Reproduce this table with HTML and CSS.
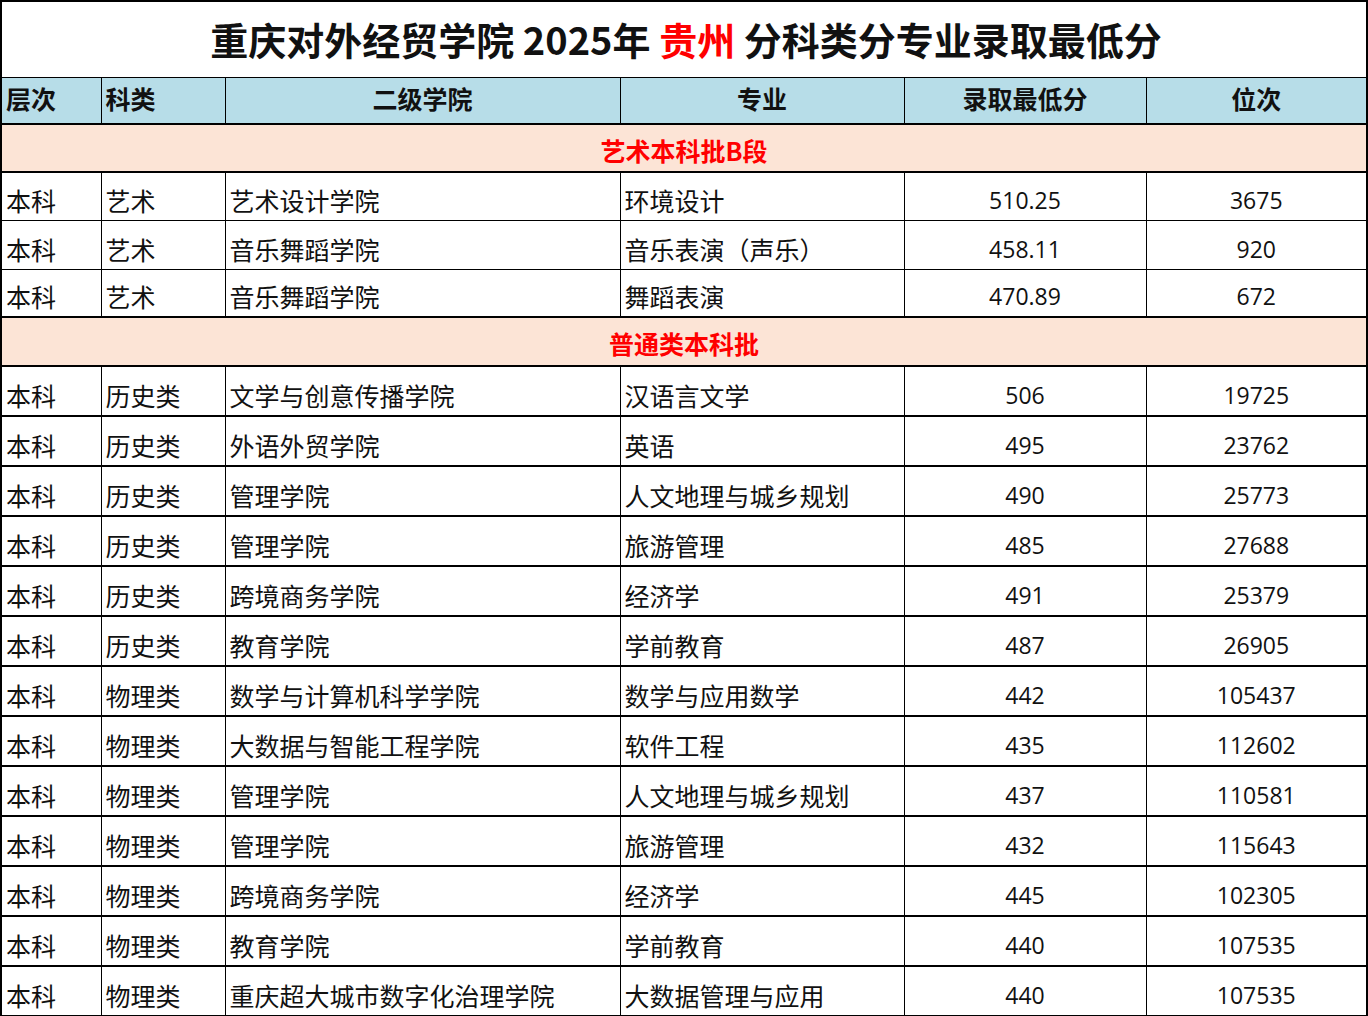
FILE: index.html
```html
<!DOCTYPE html>
<html lang="zh-CN">
<head>
<meta charset="utf-8">
<title>重庆对外经贸学院 2025年 贵州 分科类分专业录取最低分</title>
<link rel="stylesheet" href="styles.css">
</head>
<body>
<table class="sheet">
  <colgroup>
    <col class="c1"><col class="c2"><col class="c3"><col class="c4"><col class="c5"><col class="c6">
  </colgroup>
  <tr class="title-row"><td colspan="6" class="title">重庆对外经贸学院 2025年 <span class="red">贵州</span> 分科类分专业录取最低分</td></tr>
  <tr class="head">
    <th class="left">层次</th><th class="left">科类</th><th>二级学院</th><th>专业</th><th>录取最低分</th><th>位次</th>
  </tr>
  <tr class="section s1"><td colspan="6">艺术本科批B段</td></tr>
  <tr class="r48"><td>本科</td><td>艺术</td><td>艺术设计学院</td><td>环境设计</td><td class="num">510.25</td><td class="num">3675</td></tr>
  <tr class="r49"><td>本科</td><td>艺术</td><td>音乐舞蹈学院</td><td>音乐表演（声乐）</td><td class="num">458.11</td><td class="num">920</td></tr>
  <tr class="r48"><td>本科</td><td>艺术</td><td>音乐舞蹈学院</td><td>舞蹈表演</td><td class="num">470.89</td><td class="num">672</td></tr>
  <tr class="section s2"><td colspan="6">普通类本科批</td></tr>
  <tr class="r50"><td>本科</td><td>历史类</td><td>文学与创意传播学院</td><td>汉语言文学</td><td class="num">506</td><td class="num">19725</td></tr>
  <tr class="r50"><td>本科</td><td>历史类</td><td>外语外贸学院</td><td>英语</td><td class="num">495</td><td class="num">23762</td></tr>
  <tr class="r50"><td>本科</td><td>历史类</td><td>管理学院</td><td>人文地理与城乡规划</td><td class="num">490</td><td class="num">25773</td></tr>
  <tr class="r50"><td>本科</td><td>历史类</td><td>管理学院</td><td>旅游管理</td><td class="num">485</td><td class="num">27688</td></tr>
  <tr class="r50"><td>本科</td><td>历史类</td><td>跨境商务学院</td><td>经济学</td><td class="num">491</td><td class="num">25379</td></tr>
  <tr class="r50"><td>本科</td><td>历史类</td><td>教育学院</td><td>学前教育</td><td class="num">487</td><td class="num">26905</td></tr>
  <tr class="r50"><td>本科</td><td>物理类</td><td>数学与计算机科学学院</td><td>数学与应用数学</td><td class="num">442</td><td class="num">105437</td></tr>
  <tr class="r50"><td>本科</td><td>物理类</td><td>大数据与智能工程学院</td><td>软件工程</td><td class="num">435</td><td class="num">112602</td></tr>
  <tr class="r50"><td>本科</td><td>物理类</td><td>管理学院</td><td>人文地理与城乡规划</td><td class="num">437</td><td class="num">110581</td></tr>
  <tr class="r50"><td>本科</td><td>物理类</td><td>管理学院</td><td>旅游管理</td><td class="num">432</td><td class="num">115643</td></tr>
  <tr class="r50"><td>本科</td><td>物理类</td><td>跨境商务学院</td><td>经济学</td><td class="num">445</td><td class="num">102305</td></tr>
  <tr class="r50"><td>本科</td><td>物理类</td><td>教育学院</td><td>学前教育</td><td class="num">440</td><td class="num">107535</td></tr>
  <tr class="r50"><td>本科</td><td>物理类</td><td>重庆超大城市数字化治理学院</td><td>大数据管理与应用</td><td class="num">440</td><td class="num">107535</td></tr>
</table>
</body>
</html>
```

FILE: styles.css
```css
html, body {
  margin: 0;
  padding: 0;
  background: #ffffff;
}

body {
  font-family: "Noto Sans CJK SC", "Noto Sans", sans-serif;
  color: #111111;
}

.sheet {
  border-collapse: collapse;
  table-layout: fixed;
  width: 1366px;
  border: 2px solid #000;
}

.c1 { width: 100px; }
.c2 { width: 124px; }
.c3 { width: 395px; }
.c4 { width: 284px; }
.c5 { width: 242px; }
.c6 { width: 221px; }

.sheet td,
.sheet th {
  border: 1px solid #000;
  padding: 0 0 0 4px;
  overflow: hidden;
  white-space: nowrap;
}

.title-row { height: 76px; }

.title {
  text-align: center;
  font-weight: 700;
  font-size: 38px;
  line-height: 1;
  color: #111;
  padding: 4px 0 0 0;
  vertical-align: middle;
  border-bottom: 2px solid #000;
}

.red { color: #ff0000; }

.head { height: 47px; }

.head th {
  background: #b7dde8;
  font-weight: 700;
  font-size: 25px;
  line-height: 1;
  text-align: center;
  vertical-align: middle;
  padding: 0 0 4px 0;
  color: #111;
}

.head th.left {
  text-align: left;
  padding-left: 4px;
}

.section td {
  background: #fce4d6;
  color: #ff0000;
  font-weight: 700;
  font-size: 25px;
  line-height: 1;
  text-align: center;
  vertical-align: middle;
  padding: 4px 0 0 0;
  border-top: 2px solid #000;
  border-bottom: 2px solid #000;
}

.s1 { height: 48px; }
.s2 { height: 49px; }

.r48 { height: 48px; }
.r49 { height: 49px; }
.r50 { height: 50px; }

.r48 td, .r49 td, .r50 td {
  font-size: 25px;
  line-height: 1;
  vertical-align: bottom;
  padding-bottom: 7px;
}

.r50 td {
  border-bottom: 2px solid #000;
}

.sheet td.num {
  font-family: "Open Sans", "Noto Sans", sans-serif;
  text-align: center;
  padding-left: 0;
  font-size: 23px;
  padding-bottom: 8px;
}
```
